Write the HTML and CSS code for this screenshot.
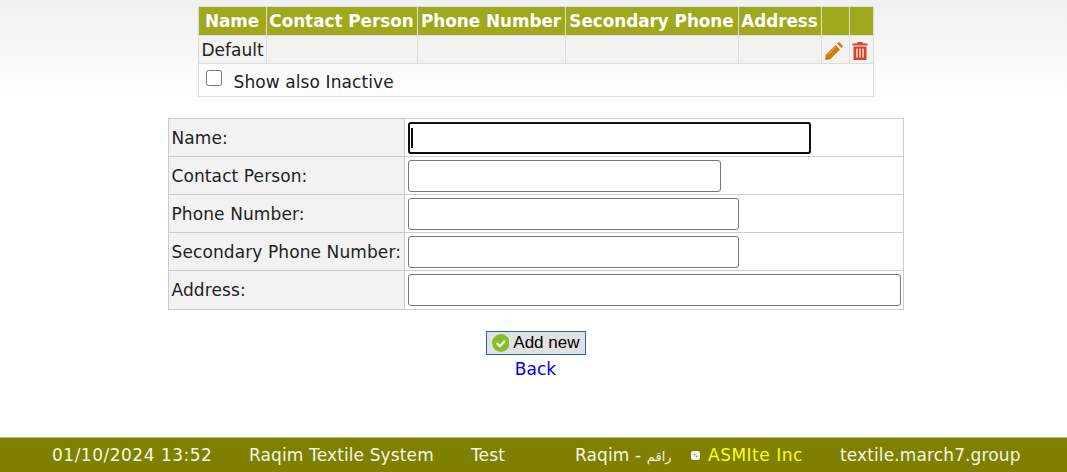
FILE: index.html
```html
<!DOCTYPE html>
<html lang="en">
<head>
    <meta charset="UTF-8">
    <title>Raqim Textile System</title>
    <link rel="stylesheet" href="styles.css">
</head>
<body>
    <div class="content">
        <table class="list-table">
            <colgroup>
                <col class="col-name">
                <col class="col-contact">
                <col class="col-phone">
                <col class="col-second">
                <col class="col-address">
                <col class="col-icon">
                <col class="col-icon2">
            </colgroup>
            <tr>
                <th>Name</th>
                <th>Contact Person</th>
                <th>Phone Number</th>
                <th>Secondary Phone</th>
                <th>Address</th>
                <th></th>
                <th></th>
            </tr>
            <tr class="data-row">
                <td>Default</td>
                <td></td>
                <td></td>
                <td></td>
                <td></td>
                <td class="icon-cell">
                    <svg class="icon" width="18" height="18" viewBox="0 0 18 18">
                        <path fill="#d07c0c" d="M0 18l.8-5.200L10.600 3l4.400 4.400L5.200 17.200z"/>
                        <path fill="#d07c0c" d="M12 1.600l1-1a1.300 1.300 0 0 1 1.800 0l2.600 2.600a1.300 1.300 0 0 1 0 1.800l-1 1z"/>
                        <path stroke="#f3d9a8" stroke-width="0.6" d="M3 12.500l7.500-7.500"/>
                    </svg>
                </td>
                <td class="icon-cell">
                    <svg class="icon" width="16" height="18" viewBox="0 0 16 18">
                        <path fill="#d8432c" d="M5.500 0h5l.6 1.400H15.500V3.500H.5V1.400h4.400z"/>
                        <path fill="#d8432c" d="M1.500 4.500h13V18h-13z"/>
                        <path fill="#f3e2c0" d="M4.200 6.500h1.500v9H4.200zM7.250 6.500h1.500v9h-1.500zM10.300 6.500h1.500v9h-1.500z"/>
                    </svg>
                </td>
            </tr>
            <tr class="check-row">
                <td colspan="7">
                    <label class="check-label"><input type="checkbox" class="check"> Show also Inactive</label>
                </td>
            </tr>
        </table>

        <table class="form-table">
            <tr>
                <td class="form-label">Name:</td>
                <td class="field-cell"><input type="text" class="field field-name" autofocus><span class="caret"></span></td>
            </tr>
            <tr>
                <td class="form-label">Contact Person:</td>
                <td><input type="text" class="field field-contact"></td>
            </tr>
            <tr>
                <td class="form-label">Phone Number:</td>
                <td><input type="text" class="field field-phone"></td>
            </tr>
            <tr>
                <td class="form-label">Secondary Phone Number:</td>
                <td><input type="text" class="field field-phone"></td>
            </tr>
            <tr class="last-row">
                <td class="form-label">Address:</td>
                <td><input type="text" class="field field-address"></td>
            </tr>
        </table>

        <div class="actions">
            <button type="button" class="add-btn">
                <svg width="18" height="18" viewBox="0 0 17 17">
                    <circle cx="8.500" cy="8.500" r="8.500" fill="#84bf2a"/>
                    <path fill="none" stroke="#eef5e0" stroke-width="2.200" d="M4.500 8.500l3 3 5-5"/>
                </svg>
                Add new
            </button>
            <a class="back-link" href="#">Back</a>
        </div>
    </div>

    <footer class="footer">
        <span class="f-date">01/10/2024 13:52</span>
        <span class="f-system">Raqim Textile System</span>
        <span class="f-test">Test</span>
        <span class="f-raqim">Raqim - <span class="f-arabic">راقم</span></span>
        <span class="f-brand">
            <svg width="9" height="9" viewBox="0 0 9 9">
                <rect width="9" height="9" rx="2" fill="#f2f2e6"/>
                <path fill="#6f6f3a" d="M3 3h1.200v1.200H3zM4.800 4.800H6V6H4.800z"/>
            </svg>
            <span class="f-asm">ASMIte Inc</span>
        </span>
        <span class="f-host">textile.march7.group</span>
    </footer>
</body>
</html>
```

FILE: styles.css
```css
* {
    box-sizing: border-box;
}

html,
body {
    height: 100%;
}

body {
    margin: 0;
    display: flex;
    flex-direction: column;
    font-family: "DejaVu Sans", Verdana, sans-serif;
    font-size: 17px;
    color: #222;
    background: linear-gradient(#f0f0f0, #fff 100px) no-repeat;
}

.content {
    flex: 1;
    padding-top: 6px;
    padding-left: 4px;
}

table {
    border-collapse: collapse;
    table-layout: fixed;
    margin: 0 auto;
}

/* top list */
.list-table {
    width: 675px;
}

.list-table th,
.list-table td {
    border: 1px solid #ddd;
    padding: 0 3px;
    white-space: nowrap;
    overflow: hidden;
}

.list-table th {
    height: 29px;
    padding: 0;
    background-color: #a0a81c;
    color: #fff;
    font-weight: bold;
    font-size: 16.8px;
    text-align: center;
}

.col-name { width: 68px; }
.col-contact { width: 151px; }
.col-phone { width: 148px; }
.col-second { width: 173px; }
.col-address { width: 83px; }
.col-icon { width: 28px; }
.col-icon2 { width: 24px; }

.data-row td {
    height: 28px;
    background-color: #f2f2f2;
}

.list-table .icon-cell {
    padding: 0 3px 0 0;
}

.icon {
    display: block;
    margin: 3px auto 0;
}

.list-table .check-row td {
    height: 33px;
    padding-left: 7px;
    letter-spacing: 0.1px;
}

.check-label {
    display: flex;
    align-items: center;
    gap: 12px;
    padding-top: 4px;
}

.check {
    width: 16px;
    height: 16px;
    margin: 0 0 8px;
}

/* add form */
.form-table {
    width: 736px;
    margin-top: 21px;
}

.form-table td {
    border: 1px solid #ccc;
    height: 38px;
    padding: 0 3px;
}

.form-table .last-row td {
    height: 39px;
}

.form-label {
    width: 236px;
    background-color: #f2f2f2;
    white-space: nowrap;
    letter-spacing: 0.1px;
}

.field {
    display: block;
    height: 32px;
    padding: 1px 2px;
    font-size: 16px;
    border: 1px solid #767676;
    border-radius: 3px;
    background-color: #fff;
}

.field:focus {
    outline: 2px solid #101010;
    outline-offset: -2px;
}

.field-name { width: 403px; }
.field-contact { width: 313px; }
.field-phone { width: 331px; }
.field-address { width: 493px; }

.field-cell {
    position: relative;
}

.caret {
    position: absolute;
    left: 6px;
    top: 9px;
    width: 2px;
    height: 20px;
    background-color: #111;
}

/* buttons */
.actions {
    display: flex;
    flex-direction: column;
    align-items: center;
    margin-top: 21px;
}

.add-btn {
    display: flex;
    align-items: center;
    gap: 4px;
    width: 100px;
    height: 24px;
    padding: 0 5px;
    border: 1px solid #1a6bc0;
    border-radius: 0;
    background-color: #e1e1e1;
    color: #000;
    font-family: "Liberation Sans", Arial, sans-serif;
    font-size: 17px;
    white-space: nowrap;
}

.back-link {
    margin-top: 4px;
    color: #0000ee;
    text-decoration: none;
}

/* footer */
.footer {
    display: flex;
    align-items: center;
    height: 35px;
    padding-left: 52px;
    background-color: #808000;
    border-top: 1px solid #b5b58a;
    color: #f5f5e8;
    white-space: nowrap;
    letter-spacing: 0.12px;
}

.f-date { width: 197px; letter-spacing: 0.5px; }
.f-system { width: 222px; }
.f-test { width: 104px; }
.f-raqim { width: 116px; }

.f-arabic {
    font-size: 13px;
}

.f-brand {
    display: flex;
    align-items: center;
    gap: 8px;
    width: 149px;
}

.f-asm {
    color: #ffff00;
    letter-spacing: 0.5px;
}
```
